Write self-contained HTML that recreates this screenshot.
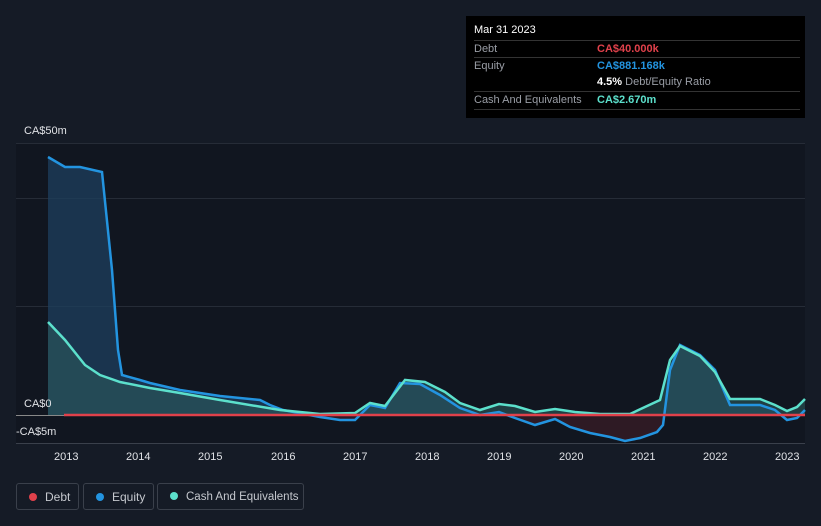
<!DOCTYPE html><html><head><style>
body{margin:0;width:821px;height:526px;background:#151b26;font-family:"Liberation Sans",sans-serif;overflow:hidden;position:relative}
.tt{position:absolute;left:466px;top:16px;width:339px;height:102px;background:#000;color:#fff;font-size:11px}
.tt .r{position:absolute;left:8px;width:326px;border-top:1px solid #333;height:17px;line-height:17px;color:#9a9ea6}
.tt .v{position:absolute;left:123px;font-weight:bold}
.lg{position:absolute;top:483px;height:27px;border:1px solid #3a404b;border-radius:3px;color:#c5c8ce;font-size:12px;line-height:27px;box-sizing:border-box;white-space:nowrap;overflow:hidden}
.lg i{display:inline-block;width:8px;height:8px;border-radius:50%;margin:0 8px 0 12px;vertical-align:-0px}
.ax{position:absolute;color:#e0e2e6;font-size:11px}
</style></head><body>
<svg width="821" height="526" style="position:absolute;left:0;top:0">
<defs><clipPath id="eq"><path d="M48,157 L65,167 80,167 102,172 112,270 118,350 122,375 140,380 150,383 180,390 220,396 260,400 270,405 283,410 320,417 340,420 355,420 370,405 385,408 400,383 420,384 440,395 460,408 480,415 499,412 515,418 535,425 555,419 570,427 590,433 610,437 625,441 640,438 657,432 663,425 670,370 680,345 700,355 715,370 730,405 760,405 775,410 787,420 797,418 805,410 L805,415 L48,415Z"/></clipPath></defs>
<rect x="16" y="143" width="789" height="300" fill="#111620"/>
<g stroke="#262c37" stroke-width="1"><line x1="16" y1="143.5" x2="805" y2="143.5"/><line x1="16" y1="198.5" x2="805" y2="198.5"/><line x1="16" y1="306.5" x2="805" y2="306.5"/></g>
<line x1="16" y1="443.5" x2="805" y2="443.5" stroke="#3a404b"/>
<line x1="16" y1="415.5" x2="64" y2="415.5" stroke="#888"/>
<g clip-path="url(#eq)"><rect x="16" y="143" width="789" height="272" fill="#1e3f5e" opacity="0.75"/><rect x="16" y="415" width="789" height="30" fill="#3a1c26" opacity="0.7"/></g>
<path d="M48,322 L65,340 85,365 100,375 120,382 150,388 180,393 220,400 280,410 320,414 355,413 370,403 385,406 405,380 425,382 445,392 460,403 480,410 499,404 515,406 535,412 555,409 575,412 600,414 630,414 660,400 670,360 680,346 700,356 715,372 730,399 760,399 775,405 787,411 797,407 805,399 L805,415 L48,415Z" fill="#2b5a5c" opacity="0.6"/>
<path d="M48,157 L65,167 80,167 102,172 112,270 118,350 122,375 140,380 150,383 180,390 220,396 260,400 270,405 283,410 320,417 340,420 355,420 370,405 385,408 400,383 420,384 440,395 460,408 480,415 499,412 515,418 535,425 555,419 570,427 590,433 610,437 625,441 640,438 657,432 663,425 670,370 680,345 700,355 715,370 730,405 760,405 775,410 787,420 797,418 805,410" fill="none" stroke="#2394e0" stroke-width="2.5"/>
<path d="M48,322 L65,340 85,365 100,375 120,382 150,388 180,393 220,400 280,410 320,414 355,413 370,403 385,406 405,380 425,382 445,392 460,403 480,410 499,404 515,406 535,412 555,409 575,412 600,414 630,414 660,400 670,360 680,346 700,356 715,372 730,399 760,399 775,405 787,411 797,407 805,399" fill="none" stroke="#5ce0cc" stroke-width="2.5"/>
<line x1="64" y1="415" x2="805" y2="415" stroke="#e0414b" stroke-width="2.5"/>
</svg>
<div class="ax" style="left:24px;top:125px">CA$50m</div>
<div class="ax" style="left:24px;top:398px">CA$0</div>
<div class="ax" style="left:16px;top:426px">-CA$5m</div>
<div class="ax" style="left:54px;top:451px">2013</div><div class="ax" style="left:126px;top:451px">2014</div><div class="ax" style="left:198px;top:451px">2015</div><div class="ax" style="left:271px;top:451px">2016</div><div class="ax" style="left:343px;top:451px">2017</div><div class="ax" style="left:415px;top:451px">2018</div><div class="ax" style="left:487px;top:451px">2019</div><div class="ax" style="left:559px;top:451px">2020</div><div class="ax" style="left:631px;top:451px">2021</div><div class="ax" style="left:703px;top:451px">2022</div><div class="ax" style="left:775px;top:451px">2023</div>
<div class="tt">
<div style="position:absolute;left:8px;top:8px">Mar 31 2023</div>
<div class="r" style="top:24px">Debt<span class="v" style="color:#e0414b">CA$40.000k</span></div>
<div class="r" style="top:41px">Equity<span class="v" style="color:#2394e0">CA$881.168k</span></div>
<div class="r" style="top:58px;border-top:none"><span class="v" style="color:#fff">4.5% <span style="color:#9a9ea6;font-weight:normal">Debt/Equity Ratio</span></span></div>
<div class="r" style="top:75px;border-bottom:1px solid #333">Cash And Equivalents<span class="v" style="color:#5ce0cc">CA$2.670m</span></div>
</div>
<div class="lg" style="left:16px;width:63px"><i style="background:#e0414b"></i>Debt</div>
<div class="lg" style="left:83px;width:71px"><i style="background:#2394e0"></i>Equity</div>
<div class="lg" style="left:157px;width:147px;font-size:11.5px"><i style="background:#5ce0cc"></i>Cash And Equivalents</div>
</body></html>
